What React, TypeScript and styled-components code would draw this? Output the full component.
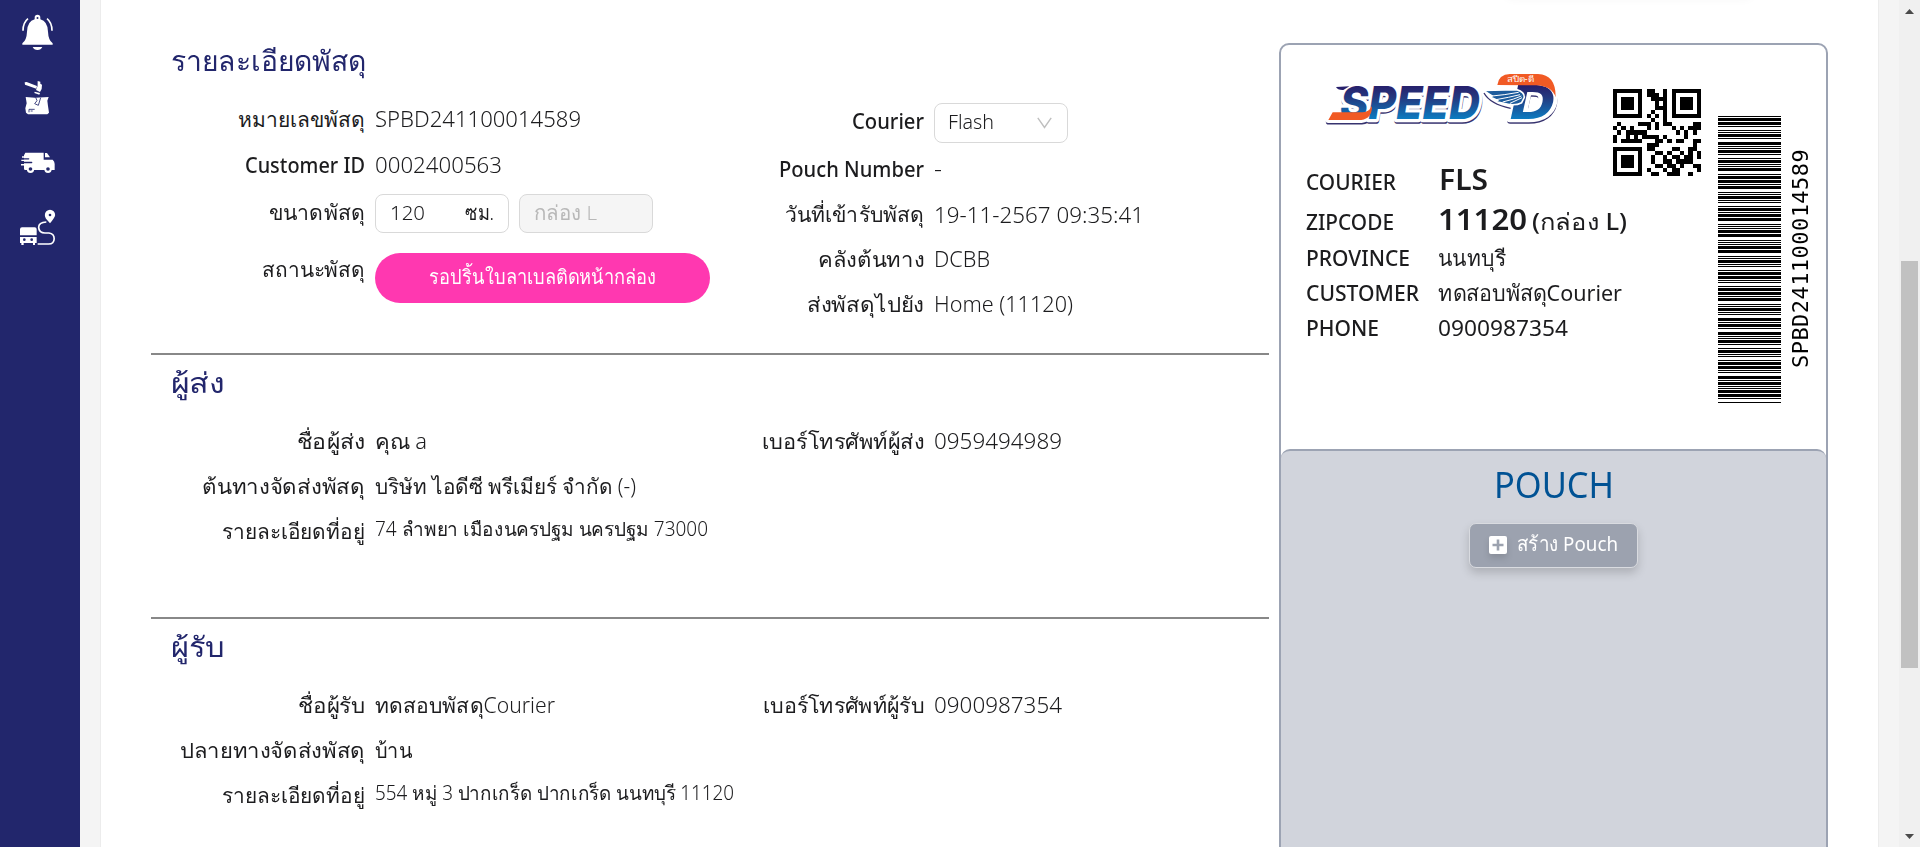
import React, { useLayoutEffect, useRef, useState } from 'react';
import styled, { createGlobalStyle } from 'styled-components';

const navy = '#22266c';
const ink = '#1c1c1e';

const GlobalStyle = createGlobalStyle`
  * { box-sizing: border-box; }
  html, body { margin: 0; height: 847px; overflow: hidden; background: #f4f4f4; }
  body { font-family: "Noto Sans", sans-serif; color: ${ink}; }
`;

const FitBox = styled.span<{ $w: number }>`
  display: inline-block;
  flex: none;
  width: ${p => p.$w}px;
  line-height: 36px;
  white-space: nowrap;
`;
const FitInner = styled.span<{ $size: number; $weight: number; $color?: string }>`
  display: inline-block;
  font-size: ${p => p.$size}px;
  font-weight: ${p => p.$weight};
  font-synthesis: none;
  color: ${p => p.$color || 'inherit'};
  transform-origin: left center;
`;

type FitProps = { w: number; size?: number; weight?: number; color?: string; children: string };

/* Text that fills an exact advance width, whichever Thai font is present. */
function Fit({ w, size = 21, weight = 350, color, children }: FitProps) {
  const ref = useRef<HTMLSpanElement>(null);
  const [k, setK] = useState(1);
  useLayoutEffect(() => {
    const el = ref.current;
    if (el) setK(w / (el.getBoundingClientRect().width || w));
  }, []);
  return (
    <FitBox $w={w}>
      <FitInner ref={ref} $size={size} $weight={weight} $color={color} style={{ transform: `scaleX(${k})` }}>
        {children}
      </FitInner>
    </FitBox>
  );
}

const Page = styled.div`
  display: flex;
  height: 847px;
  overflow: hidden;
`;
const Sidebar = styled.nav`
  width: 80px;
  flex: none;
  background: ${navy};
  padding: 14px 0 0 20px;
  display: flex;
  flex-direction: column;
`;
const NavIcon = styled.svg<{ $top: number; $left: number }>`
  display: block;
  flex: none;
  margin: ${p => p.$top}px 0 0 ${p => p.$left}px;
`;
const Panel = styled.main`
  position: relative;
  width: 1779px;
  flex: none;
  margin-left: 20px;
  border: solid #ececec;
  border-width: 0 1px;
  background: #fff;
  padding-left: 50px;
  display: flex;
  gap: 10px;
`;
const TopShadow = styled.div`
  position: absolute;
  left: 1405px;
  top: -30px;
  width: 246px;
  height: 26px;
  border-radius: 6px;
  box-shadow: 0 3px 10px rgba(0, 0, 0, 0.04);
`;
const Details = styled.div`
  width: 1118px;
  flex: none;
`;
const Section = styled.section<{ $first?: boolean }>`
  height: ${p => (p.$first ? 353 : 264)}px;
  border-top: ${p => (p.$first ? '0' : '2px solid #888')};
  padding: ${p => (p.$first ? 39 : 6)}px 0 0;
`;
const Heading = styled.h2<{ $gap: number }>`
  margin: 0 0 ${p => p.$gap}px;
  padding-left: 20px;
  height: 44px;
  display: flex;
  align-items: center;
  color: ${navy};
`;
const Columns = styled.div`
  display: grid;
  grid-template-columns: 559px 559px;
`;
const Row = styled.div<{ $h: number }>`
  height: ${p => p.$h}px;
  display: flex;
  align-items: center;
`;
const Label = styled.div`
  width: 214px;
  margin-right: 10px;
  flex: none;
  display: flex;
  justify-content: flex-end;
`;
const Address = styled.div`
  padding-bottom: 5px;
`;
const Field = styled.div<{ $disabled?: boolean; $select?: boolean }>`
  width: 134px;
  height: ${p => (p.$select ? 40 : 39)}px;
  margin: ${p => (p.$select ? '3px' : '1px')} 10px 0 0;
  border: 1px solid #d9d9d9;
  border-radius: 8px;
  background: ${p => (p.$disabled ? '#f5f5f5' : '#fff')};
  padding: ${p => (p.$select ? '0 15px 2px 13px' : '0 14px')};
  display: flex;
  align-items: center;
  justify-content: space-between;
`;
const Chevron = styled.svg`
  display: block;
  margin-top: 1px;
`;
const Status = styled.div`
  width: 335px;
  height: 50px;
  margin-top: 17px;
  padding-bottom: 2px;
  border-radius: 25px;
  background: #ff38b0;
  display: flex;
  align-items: center;
  justify-content: center;
`;

const Card = styled.aside`
  width: 549px;
  height: 820px;
  flex: none;
  margin-top: 43px;
  border: 2px solid #9ca3b3;
  border-radius: 10px;
`;
const Parcel = styled.div`
  height: 404px;
  display: flex;
`;
const Info = styled.div`
  width: 420px;
  padding-left: 25px;
`;
const CardHead = styled.div`
  height: 116px;
  display: flex;
  align-items: flex-start;
  justify-content: space-between;
  padding-left: 18px;
`;
const Logo = styled.svg`
  margin-top: 26px;
  flex: none;
  display: block;
  overflow: visible;
`;
const QrSvg = styled.svg`
  margin-top: 44px;
  flex: none;
  display: block;
`;
const CardRow = styled.div<{ $h: number }>`
  height: ${p => p.$h}px;
  display: grid;
  grid-template-columns: 132px auto;
  align-items: baseline;
`;
const CourierCode = styled.div`
  padding-left: 1px;
`;
const ZipValue = styled.div`
  display: flex;
  align-items: baseline;
  gap: 5px;
`;
const BarSvg = styled.svg`
  margin: 71px 0 0 17px;
  flex: none;
  display: block;
`;
const SideCode = styled.div`
  margin: 70px 0 0 6px;
  height: 287px;
  width: 28px;
  line-height: 28px;
  writing-mode: vertical-rl;
  transform: rotate(180deg);
  text-align: center;
  white-space: nowrap;
  font-family: "DejaVu Sans Mono", monospace;
  font-size: 22px;
  letter-spacing: 0.45px;
  color: #000;
`;
const Pouch = styled.div`
  height: 500px;
  border-top: 2px solid #9ca3b3;
  border-radius: 9px 9px 0 0;
  background: #d1d4dc;
  padding-top: 16px;
  display: flex;
  flex-direction: column;
  align-items: center;
`;
const PouchButton = styled.button`
  width: 169px;
  height: 45px;
  margin: 13px 1px 0 0;
  padding: 0 0 1px 19px;
  border: 1px solid #d9dbe0;
  border-radius: 7px;
  background: #9ca2af;
  box-shadow: 0 5px 10px rgba(0, 0, 0, 0.17);
  display: flex;
  align-items: center;
  gap: 10px;
  font-family: inherit;
  color: #fff;
`;
const PlusIcon = styled.svg`
  flex: none;
  filter: drop-shadow(0 4px 3px rgba(0, 0, 0, 0.12));
`;
const Scrollbar = styled.div`
  width: 21px;
  flex: none;
  margin-left: auto;
  background: #f0f0f0;
  padding: 9px 2px 8px;
  display: flex;
  flex-direction: column;
`;
const Arrow = styled.svg`
  display: block;
  margin: 0 auto;
`;
const Thumb = styled.div`
  height: 407px;
  margin: 247px 0 auto;
  background: #c1c1c1;
`;

/* Code 39: n = narrow (1 unit), w = wide (3 units), bar first. */
const CODE39: Record<string, string> = {
  '0': 'nnnwwnwnn', '1': 'wnnwnnnnw', '2': 'nnwwnnnnw', '3': 'wnwwnnnnn', '4': 'nnnwwnnnw',
  '5': 'wnnwwnnnn', '6': 'nnwwwnnnn', '7': 'nnnwnnwnw', '8': 'wnnwnnwnn', '9': 'nnwwnnwnn',
  S: 'nnwnnnwwn', P: 'nnwnwnnwn', B: 'nnwnnwnnw', D: 'nnnnwwnnw', '*': 'nwnnwnwnn',
};

function Barcode({ value }: { value: string }) {
  const bars: { y: number; h: number }[] = [];
  let pos = 0;
  for (const ch of `*${value}*`) {
    CODE39[ch].split('').forEach((c, i) => {
      const h = c === 'w' ? 3 : 1;
      if (i % 2 === 0) bars.push({ y: 287 - pos - h, h });
      pos += h;
    });
    pos += 1;
  }
  return (
    <BarSvg width="63" height="287" viewBox="0 0 63 287">
      {bars.map(b => <rect key={b.y} x="0" y={b.y} width="63" height={b.h} fill="#000" />)}
    </BarSvg>
  );
}

/* QR version 1, level Q, alphanumeric, mask 5. */
function qrMatrix(text: string): boolean[][] {
  const alpha = '0123456789ABCDEFGHIJKLMNOPQRSTUVWXYZ $%*+-./:';
  const bin = (v: number, n: number) => v.toString(2).padStart(n, '0');
  let bits = '0010' + bin(text.length, 9);
  for (let i = 0; i < text.length; i += 2) {
    bits += bin(alpha.indexOf(text[i]) * 45 + alpha.indexOf(text[i + 1]), 11);
  }
  bits = bits.padEnd(104, '0');
  const data = (bits.match(/.{8}/g) || []).map(b => parseInt(b, 2));
  const mul = (a: number, b: number) => {
    let r = 0;
    for (let x = a, y = b; y; y >>= 1) {
      if (y & 1) r ^= x;
      x <<= 1;
      if (x & 256) x ^= 0x11d;
    }
    return r;
  };
  let gen = [1];
  for (let i = 0, root = 1; i < 13; i++, root = mul(root, 2)) {
    const next = gen.concat(0);
    gen.forEach((g, j) => { next[j + 1] ^= mul(g, root); });
    gen = next;
  }
  const rem = data.concat(Array(13).fill(0));
  for (let i = 0; i < 13; i++) {
    const lead = rem[i];
    gen.forEach((g, j) => { rem[i + j] ^= mul(g, lead); });
  }
  const stream = data.concat(rem.slice(13)).map(v => bin(v, 8)).join('');

  const m: (boolean | null)[][] = Array.from({ length: 21 }, () => Array(21).fill(null));
  const finder = (r: number, c: number) => {
    for (let i = -1; i < 8; i++) for (let j = -1; j < 8; j++) {
      const y = r + i, x = c + j;
      if (y < 0 || x < 0 || y > 20 || x > 20) continue;
      const d = Math.max(Math.abs(i - 3), Math.abs(j - 3));
      m[y][x] = d === 3 || d < 2;
    }
  };
  finder(0, 0); finder(0, 14); finder(14, 0);
  for (let i = 8; i < 13; i++) { m[6][i] = i % 2 === 0; m[i][6] = i % 2 === 0; }
  m[13][8] = true;
  const f = '010000110000011'.split('').map(b => b === '1');
  const rowCols = [0, 1, 2, 3, 4, 5, 7, 8];
  const colRows = [7, 5, 4, 3, 2, 1, 0];
  f.forEach((b, i) => {
    if (i < 8) m[8][rowCols[i]] = b; else m[colRows[i - 8]][8] = b;
    if (i < 7) m[20 - i][8] = b; else m[8][6 + i] = b;
  });
  let k = 0;
  let up = true;
  for (let c = 20; c > 0; c -= 2) {
    if (c === 6) c = 5;
    for (let n = 0; n < 21; n++) {
      const r = up ? 20 - n : n;
      for (const x of [c, c - 1]) {
        if (m[r][x] !== null) continue;
        const mask = ((r * x) % 2) + ((r * x) % 3) === 0;
        m[r][x] = (stream[k++] === '1') !== mask;
      }
    }
    up = !up;
  }
  return m as boolean[][];
}

function QrCode({ value }: { value: string }) {
  const d = qrMatrix(value)
    .map((row, y) => row.map((on, x) => (on ? `M${x} ${y}h1v1h-1z` : '')).join(''))
    .join('');
  return (
    <QrSvg width="88" height="87" viewBox="0 0 21 21" preserveAspectRatio="none" shapeRendering="crispEdges">
      <path d={d} fill="#000" />
    </QrSvg>
  );
}

function SpeedLogo() {
  const word = (extra: React.SVGProps<SVGTextElement>) => (
    <g fontFamily="Inter, sans-serif" fontWeight="800" fontStyle="italic" strokeLinejoin="round">
      <text x="212" y="358" fontSize="137" textLength="420" lengthAdjust="spacingAndGlyphs" {...extra}>SPEED</text>
      <text x="722" y="358" fontSize="142" textLength="134" lengthAdjust="spacingAndGlyphs" {...extra}>D</text>
    </g>
  );
  const tail = 'M177 360 L190 337 H280 Q300 335 308 318 Q308 356 276 360 Z';
  return (
    <Logo width="237" height="56" viewBox="164 213 711 168">
      <defs>
        <linearGradient id="deep" gradientUnits="userSpaceOnUse" x1="0" y1="258" x2="0" y2="360">
          <stop offset="0" stopColor="#27206c" />
          <stop offset="0.35" stopColor="#233a80" />
          <stop offset="1" stopColor="#0b7fc4" />
        </linearGradient>
      </defs>
      <g transform="translate(1 5)">
        {word({ fill: '#37336f', stroke: '#37336f', strokeWidth: 17 })}
        <path d={tail} fill="#37336f" stroke="#37336f" strokeWidth="17" strokeLinejoin="round" />
      </g>
      {word({ fill: '#fff', stroke: '#fff', strokeWidth: 20 })}
      <path d={tail} fill="#fff" stroke="#fff" strokeWidth="18" strokeLinejoin="round" />
      {word({ fill: 'url(#deep)' })}
      <path d="M200 261 Q205 271 222 270 L240 259 Z" fill="#27206c" />
      <path d={tail} fill="#f15a24" />
      <path d="M684 255 Q688 223 722 222 H806 Q860 224 859 292 Q848 258 800 256 Z" fill="#f15a24" />
      <text x="713" y="245" fontFamily="Noto Sans, sans-serif" fontSize="25" fontWeight="400" fill="#fff" textLength="80" lengthAdjust="spacingAndGlyphs">สปีด-ดี</text>
      <path d="M642 271 L742 269 Q766 276 765 292 L757 308 Q735 320 700 309 L676 305 L684 301 L664 292 L668 288 Z" fill="#1d5c9c" stroke="#fff" strokeWidth="5" />
      <path d="M668 288 Q705 285 748 277 M680 299 Q720 292 752 284 M700 306 Q735 298 756 288 M722 310 L758 293" fill="none" stroke="#fff" strokeWidth="3" />
      <path d="M644 279 Q662 312 724 325" fill="none" stroke="#37336f" strokeWidth="4" />
    </Logo>
  );
}

const NavIcons = () => (
  <>
    <NavIcon $top={0} $left={1} width="33" height="37" viewBox="63 42 99 111" fill="#fff">
      <path d="M67 134V130Q80 120 81 95Q82 64 104 58V53a8.500 8.500 0 0 1 17 0V58Q143 64 144 95Q145 120 158 130V134Z" />
      <path d="M98 141H127Q123 150 112.500 150Q102 150 98 141Z" />
      <circle cx="112.500" cy="54" r="3" fill={navy} />
      <path d="M69 92Q69 68 84 56M156 92Q156 68 141 56" fill="none" stroke="#fff" strokeWidth="5" />
    </NavIcon>
    <NavIcon $top={29} $left={4} width="26" height="35" viewBox="72 240 78 105" fill="#fff">
      <path d="M74 247L80 246L111 258L109 266L75 254Z" />
      <path d="M113 243L121 245L121 251L126 254Q127 268 120 276L108 270Q115 258 113 243Z" />
      <path d="M104 275L120 279L118 284L103 279Z" />
      <path d="M77 291L105 293L146 291L142 302L144 318L147 338L142 343H84L78 338L76 325L80 310Z" />
      <path d="M107 292L111 302L104 311L115 316L122 293M87 337V328H104M92 333H98" fill="none" stroke={navy} strokeWidth="2.500" />
    </NavIcon>
    <NavIcon $top={37} $left={0} width="36" height="22" viewBox="60 456 108 66" fill="#fff">
      <path d="M76 458H131V479H158Q164 484 164 492V510H76Q72 510 72 506V466Z" />
      <path d="M135 459H141L150 472H135Z" />
      <circle cx="91.500" cy="508" r="11" />
      <circle cx="144" cy="508" r="11" />
      <circle cx="91.500" cy="507" r="5.500" fill={navy} />
      <circle cx="144" cy="507" r="5.500" fill={navy} />
      <path d="M66 471H84M64 481H88M63 494H90" stroke="#fff" strokeWidth="4.500" />
      <path d="M64 476.500H86M62 487.500H95" stroke={navy} strokeWidth="4" strokeLinecap="round" />
    </NavIcon>
    <NavIcon $top={35} $left={0} width="36" height="37" viewBox="60 627 108 111" fill="#fff">
      <path d="M60 706V688Q60 682 66 682H104Q110 682 110 688V706ZM60 711H110V729H105V735H99V729H71V735H64V729H60Z" />
      <circle cx="73" cy="719" r="4" fill={navy} />
      <circle cx="95" cy="719" r="4" fill={navy} />
      <path d="M150 670L138 656Q134.500 650 134.500 645a15.500 15.500 0 0 1 31 0Q165 652 150 670Z" />
      <circle cx="150" cy="645" r="4" fill={navy} />
      <path d="M139 666Q116 667 116 682Q117 699 135 699H147Q162.500 701 162.500 716Q162 732 146 732H113" fill="none" stroke="#fff" strokeWidth="5" />
    </NavIcon>
  </>
);

type ItemProps = { label: string; lw: number; h: number; children: React.ReactNode };
const Item = ({ label, lw, h, children }: ItemProps) => (
  <Row $h={h}>
    <Label><Fit w={lw} weight={500}>{label}</Fit></Label>
    {children}
  </Row>
);

export default function App() {
  return (
    <Page>
      <GlobalStyle />
      <Sidebar><NavIcons /></Sidebar>
      <Panel>
        <TopShadow />
        <Details>
          <Section $first>
            <Heading $gap={15}><Fit w={195} size={28} weight={500}>รายละเอียดพัสดุ</Fit></Heading>
            <Columns>
              <div>
                <Item label="หมายเลขพัสดุ" lw={127} h={43}><Fit w={206} size={22}>SPBD241100014589</Fit></Item>
                <Item label="Customer ID" lw={120} h={49}><Fit w={127} size={22}>0002400563</Fit></Item>
                <Item label="ขนาดพัสดุ" lw={96} h={46}>
                  <Field>
                    <Fit w={35} size={20}>120</Fit>
                    <Fit w={29} size={20}>ซม.</Fit>
                  </Field>
                  <Field $disabled><Fit w={63} size={20} weight={300} color="#b8b8b8">กล่อง L</Fit></Field>
                </Item>
                <Item label="สถานะพัสดุ" lw={103} h={67}>
                  <Status><Fit w={227} size={20} color="#fff">รอปริ้นใบลาเบลติดหน้ากล่อง</Fit></Status>
                </Item>
              </div>
              <div>
                <Item label="Courier" lw={72} h={47}>
                  <Field $select>
                    <Fit w={46} size={20}>Flash</Fit>
                    <Chevron width="15" height="12" viewBox="0 0 15 12" fill="none" stroke="#bfbfbf" strokeWidth="1.400">
                      <path d="M0.800 0.800L7.500 10.500L14.200 0.800" />
                    </Chevron>
                  </Field>
                </Item>
                <Item label="Pouch Number" lw={145} h={49}><Fit w={8} size={22}>-</Fit></Item>
                <Item label="วันที่เข้ารับพัสดุ" lw={139} h={42}><Fit w={210} size={22}>19-11-2567 09:35:41</Fit></Item>
                <Item label="คลังต้นทาง" lw={106} h={47}><Fit w={56} size={22}>DCBB</Fit></Item>
                <Item label="ส่งพัสดุไปยัง" lw={117} h={43}><Fit w={139} size={22}>Home (11120)</Fit></Item>
              </div>
            </Columns>
          </Section>
          <Section>
            <Heading $gap={14}><Fit w={54} size={28} weight={500}>ผู้ส่ง</Fit></Heading>
            <Columns>
              <div>
                <Item label="ชื่อผู้ส่ง" lw={68} h={45}><Fit w={52}>คุณ a</Fit></Item>
                <Item label="ต้นทางจัดส่งพัสดุ" lw={163} h={45}><Fit w={261}>บริษัท ไอดีซี พรีเมียร์ จำกัด (-)</Fit></Item>
                <Item label="รายละเอียดที่อยู่" lw={143} h={45}>
                  <Address><Fit w={333} size={19.5}>74 ลำพยา เมืองนครปฐม นครปฐม 73000</Fit></Address>
                </Item>
              </div>
              <div>
                <Item label="เบอร์โทรศัพท์ผู้ส่ง" lw={162} h={45}><Fit w={128} size={22}>0959494989</Fit></Item>
              </div>
            </Columns>
          </Section>
          <Section>
            <Heading $gap={14}><Fit w={54} size={28} weight={500}>ผู้รับ</Fit></Heading>
            <Columns>
              <div>
                <Item label="ชื่อผู้รับ" lw={67} h={45}><Fit w={180}>ทดสอบพัสดุCourier</Fit></Item>
                <Item label="ปลายทางจัดส่งพัสดุ" lw={185} h={45}><Fit w={37}>บ้าน</Fit></Item>
                <Item label="รายละเอียดที่อยู่" lw={143} h={45}>
                  <Address><Fit w={359} size={19.5}>554 หมู่ 3 ปากเกร็ด ปากเกร็ด นนทบุรี 11120</Fit></Address>
                </Item>
              </div>
              <div>
                <Item label="เบอร์โทรศัพท์ผู้รับ" lw={161} h={45}><Fit w={128} size={22}>0900987354</Fit></Item>
              </div>
            </Columns>
          </Section>
        </Details>
        <Card>
          <Parcel>
            <Info>
              <CardHead>
                <SpeedLogo />
                <QrCode value="SPBD241100014589" />
              </CardHead>
              <CardRow $h={40}>
                <Fit w={90} size={22} weight={500}>COURIER</Fit>
                <CourierCode><Fit w={49} size={28} weight={600}>FLS</Fit></CourierCode>
              </CardRow>
              <CardRow $h={38}>
                <Fit w={88} size={22} weight={500}>ZIPCODE</Fit>
                <ZipValue>
                  <Fit w={89} size={28} weight={600}>11120</Fit>
                  <Fit w={95} size={23} weight={500}>(กล่อง L)</Fit>
                </ZipValue>
              </CardRow>
              <CardRow $h={35}><Fit w={104} size={22} weight={500}>PROVINCE</Fit><Fit w={68} size={22} weight={400}>นนทบุรี</Fit></CardRow>
              <CardRow $h={35}><Fit w={113} size={22} weight={500}>CUSTOMER</Fit><Fit w={184} size={22} weight={400}>ทดสอบพัสดุCourier</Fit></CardRow>
              <CardRow $h={35}><Fit w={73} size={22} weight={500}>PHONE</Fit><Fit w={130} size={22} weight={400}>0900987354</Fit></CardRow>
            </Info>
            <Barcode value="SPBD241100014589" />
            <SideCode>SPBD241100014589</SideCode>
          </Parcel>
          <Pouch>
            <Fit w={120} size={36} weight={400} color="#005294">POUCH</Fit>
            <PouchButton>
              <PlusIcon width="18" height="18" viewBox="0 0 18 18">
                <rect width="18" height="18" rx="2" fill="#fff" />
                <path d="M9 3.500V14.500M3.500 9H14.500" stroke="#9ca2af" strokeWidth="2.600" />
              </PlusIcon>
              <Fit w={101} size={20} weight={400}>สร้าง Pouch</Fit>
            </PouchButton>
          </Pouch>
        </Card>
      </Panel>
      <Scrollbar>
        <Arrow width="9" height="5" viewBox="0 0 9 5"><path d="M0 5L4.500 0L9 5Z" fill="#4a4a4a" /></Arrow>
        <Thumb />
        <Arrow width="9" height="5" viewBox="0 0 9 5"><path d="M0 0L4.500 5L9 0Z" fill="#4a4a4a" /></Arrow>
      </Scrollbar>
    </Page>
  );
}
